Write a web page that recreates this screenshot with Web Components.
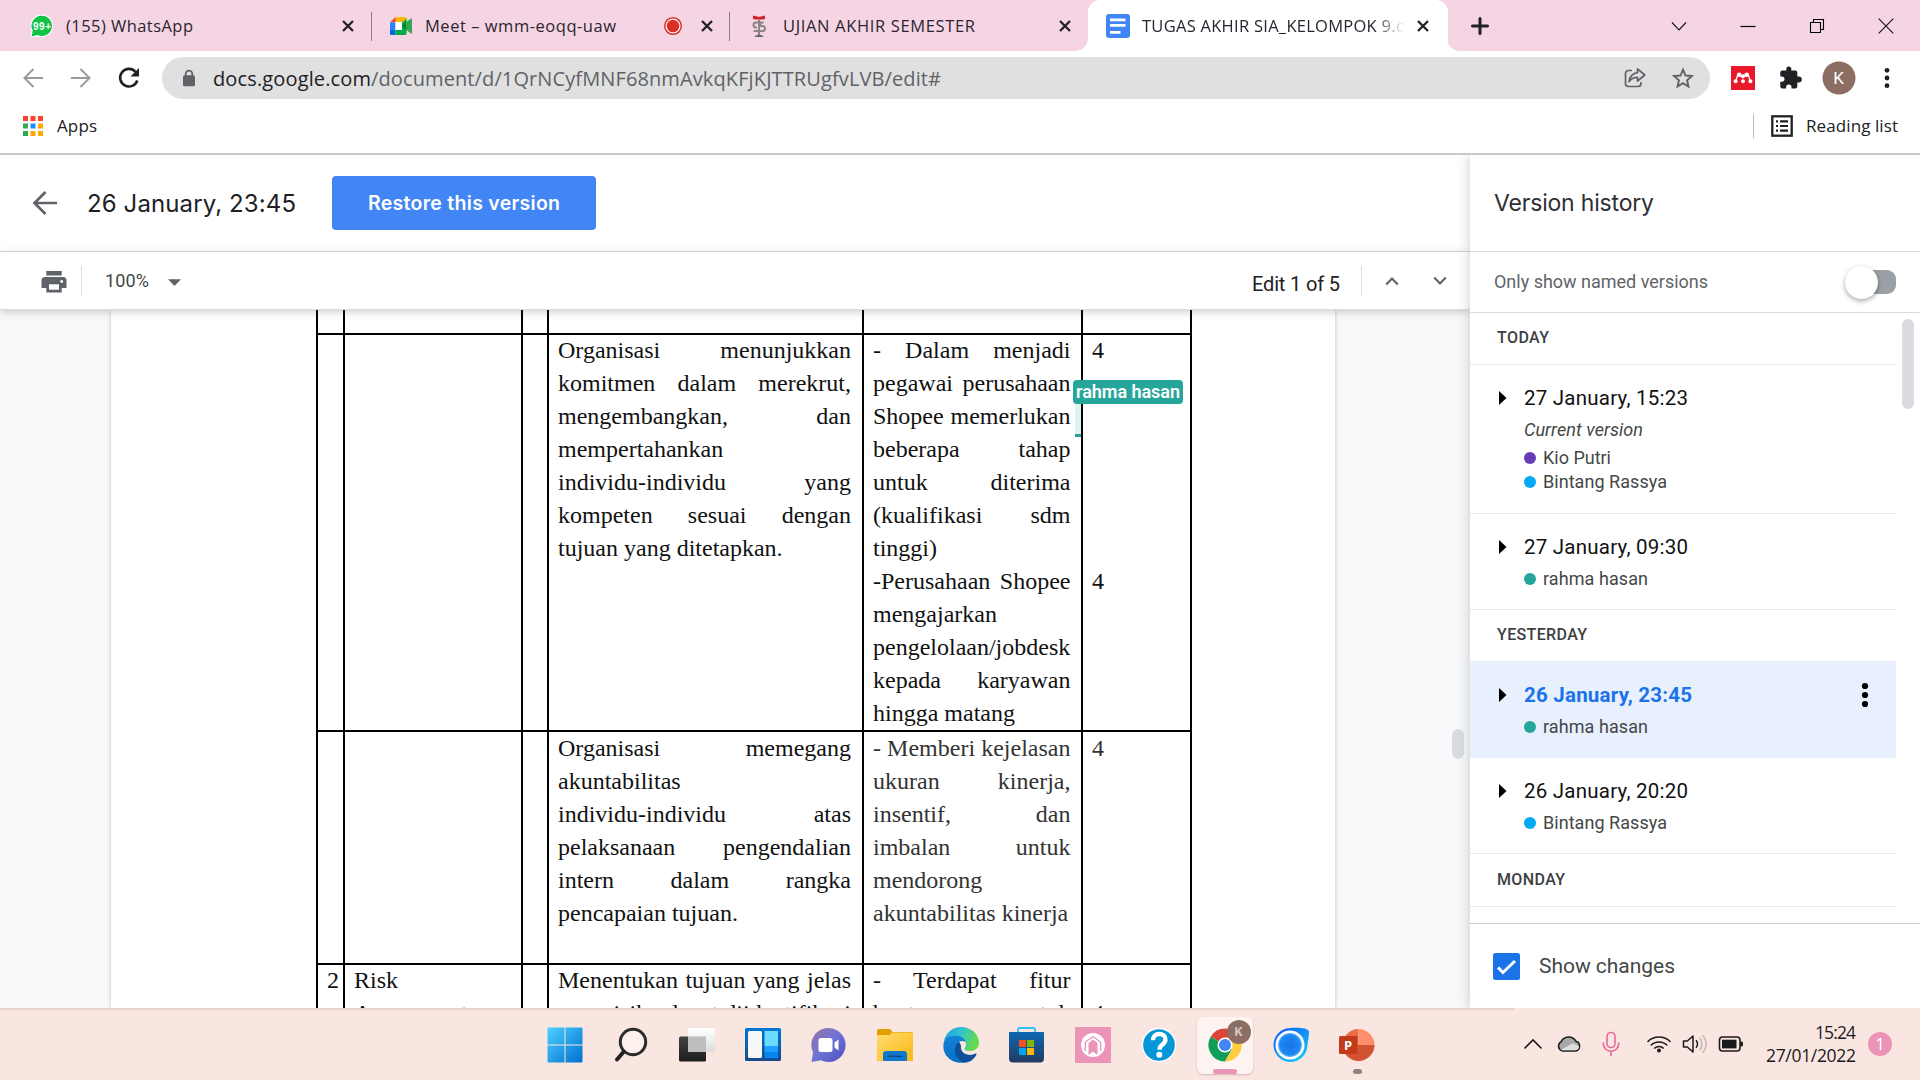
<!DOCTYPE html>
<html lang="id">
<head>
<meta charset="utf-8">
<title>TUGAS AKHIR SIA_KELOMPOK 9</title>
<style>
html,body{margin:0;padding:0}
body{width:1920px;height:1080px;overflow:hidden;background:#fff;font-family:Roboto,"Liberation Sans",sans-serif}
</style>
</head>
<body>
<desktop-screen></desktop-screen>
<script>
const define = (name, css, html, after) => {
  const t = document.createElement('template');
  t.innerHTML = '<style>*{box-sizing:border-box}:host{display:block;box-sizing:border-box}' + css + '</style>' + (typeof html === 'string' ? html : '');
  customElements.define(name, class extends HTMLElement {
    constructor() { super(); this.attachShadow({ mode: 'open' }).appendChild(t.content.cloneNode(true)); }
    connectedCallback() {
      if (this.ready) return;
      this.ready = true;
      if (typeof html === 'function') {
        const d = document.createElement('template');
        d.innerHTML = html(this);
        this.shadowRoot.appendChild(d.content.cloneNode(true));
      }
      if (after) after(this);
    }
  });
};

const ICONS = {
  whatsapp: [24, 24, '<path d="M12 .5A11.3 11.3 0 0 0 1.6 17L.5 23.6l6.700-1.400A11.300 11.300 0 1 0 12 .5z" fill="#fff"/><path d="M12 1.700A10.200 10.200 0 0 0 2.800 16.800L1.600 22.400l5.800-1.300A10.200 10.200 0 1 0 12 1.700z" fill="#0fc344"/><text x="12" y="15.800" text-anchor="middle" font-family="Liberation Sans" font-weight="700" font-size="10" textLength="18" fill="#fff">99+</text>'],
  meet: [24, 20, '<path d="M6.500 1H16a1.500 1.500 0 0 1 1.500 1.500V6h-11z" fill="#ffba00"/><path d="M1 6.500 6.500 1v5.500z" fill="#ea4335"/><path d="M1 6.500h5.500V14H1z" fill="#2684fc"/><path d="M1 14h5.500v5H2.500A1.500 1.500 0 0 1 1 17.500z" fill="#0066da"/><path d="M6.500 14h6V7l5-4.500v15A1.500 1.500 0 0 1 16 19H6.500z" fill="#00ac47"/><path d="M6.500 6H13v8H6.500z" fill="#fff"/><path d="M13 10l4.500-4.500v9z" fill="#00832d"/><path d="m17.500 6 4-3.300c.8-.5 1.500-.3 1.500.6v13.400c0 .9-.7 1.200-1.500.6l-4-3.300z" fill="#34a853"/>'],
  rec: [20, 20, '<circle cx="10" cy="10" r="8.300" fill="#fff" stroke="#d93025" stroke-width="1.500"/><circle cx="10" cy="10" r="6.300" fill="#d93025"/>'],
  ujian: [20, 24, '<path d="M4 1.500 10 3l6-1.500V5l-3 .6h-6L4 5z" fill="#d8202b"/><g fill="none" stroke="#8b8588" stroke-width="2"><path d="M14.500 8.500H7a2.500 2.500 0 0 0 0 5h1M10 6v15M8 17H4.500M11.500 9.500V12h2a2.300 2.300 0 0 1 0 5H6"/></g><path d="M5.500 23c1-2 2.500-2.300 4.500-2.300s3.500.3 4.500 2.300z" fill="#6b6668"/>'],
  docs: [24, 24, '<rect width="24" height="24" rx="3" fill="#4285f4"/><path d="M4 4.500h15.500v2.700H4zM4 10h15.500v2.700H4zM4 17h10.500v2.700H4z" fill="#fff"/>'],
  x: [14, 14, '<path d="M2 2l10 10M12 2 2 12" stroke="#202124" stroke-width="2.300"/>'],
  plus: [18, 18, '<path d="M9 1.500v15M1.500 9h15" stroke="#202124" stroke-width="3" stroke-linecap="round"/>'],
  chev: [16, 16, '<path d="M1 4.500 8 12l7-7.500" fill="none" stroke="#111" stroke-width="1.100"/>'],
  min: [16, 16, '<path d="M.5 8.500h15" stroke="#000" stroke-width="1.200"/>'],
  restore: [16, 16, '<path d="M1.500 4.500h10v10h-10zM4.500 4V1.500h10v10H12" fill="none" stroke="#000" stroke-width="1.100"/>'],
  close: [16, 16, '<path d="M.7.7l14.600 14.600M15.300.7.700 15.300" stroke="#111" stroke-width="1.100"/>'],
  back: [24, 24, '<path d="M22 12H4M12.500 3 3.500 12l9 9" fill="none" stroke="#9b9b9b" stroke-width="2"/>'],
  fwd: [24, 24, '<path d="M2 12h18M11.500 3l9 9-9 9" fill="none" stroke="#9b9b9b" stroke-width="2"/>'],
  reload: [24, 24, '<path d="M20.300 14.500A8.800 8.800 0 1 1 18.500 5.800" fill="none" stroke="#202124" stroke-width="2.600"/><path d="M22 2v8.500h-8.500z" fill="#202124"/>'],
  lock: [14, 18, '<path d="M3.700 7V5a3.300 3.300 0 0 1 6.600 0v2" fill="none" stroke="#5f6368" stroke-width="1.800"/><rect x="1" y="6.300" width="12" height="11" rx="1.500" fill="#5f6368"/>'],
  share: [24, 24, '<path d="M9 4.500H5.500a3 3 0 0 0-3 3v10a3 3 0 0 0 3 3H15a3 3 0 0 0 3-3V16" fill="none" stroke="#5f6368" stroke-width="1.700"/><path d="M14.500 2.800 21.800 9l-7.300 6v-3.600c-4 0-6.300 1-8.500 4.300.8-5 3.400-8.300 8.500-9z" fill="none" stroke="#5f6368" stroke-width="1.700" stroke-linejoin="round"/>'],
  star: [24, 24, '<path d="m12 3.600 2.500 5.900 6.400.55-4.850 4.200 1.450 6.250L12 17.200l-5.500 3.300 1.450-6.250L3.100 10.050l6.400-.55z" fill="none" stroke="#5f6368" stroke-width="1.900"/>'],
  mendeley: [24, 24, '<path fill="#e9192b" d="M0 0h24v24H0z"/><path d="M4.600 15c1.400-1.200.6-4.500 2.700-7M19.400 15c-1.400-1.200-.6-4.500-2.700-7" fill="none" stroke="#fff" stroke-width="1.300"/><g fill="#fff"><circle cx="8.300" cy="8.700" r="2.300"/><circle cx="15.700" cy="8.700" r="2.300"/><circle cx="12" cy="10.300" r="2.100"/><circle cx="4.600" cy="15.300" r="2"/><circle cx="12" cy="15.300" r="2"/><circle cx="19.400" cy="15.300" r="2"/></g>'],
  puzzle: [24, 24, '<path fill="#202124" transform="translate(.3 .6)" d="M20.500 10H19V6c0-1.100-.9-2-2-2h-4V2.500a2.500 2.500 0 0 0-5 0V4H4c-1.100 0-2 .9-2 2v3.800h1.500a2.700 2.700 0 0 1 0 5.400H2V20c0 1.100.9 2 2 2h3.800v-1.500a2.700 2.700 0 0 1 5.400 0V22H17c1.100 0 2-.9 2-2v-4h1.500a2.500 2.500 0 0 0 0-6z"/>'],
  avatar: [34, 34, '<circle cx="17" cy="17" r="16.500" fill="#8d6e63"/><text x="16.500" y="23" text-anchor="middle" font-family="Roboto" font-size="17" fill="#fff">K</text>'],
  dots: [6, 22, '<g fill="#202124"><circle cx="3" cy="3.300" r="2.400"/><circle cx="3" cy="11" r="2.400"/><circle cx="3" cy="18.700" r="2.400"/></g>'],
  dotsb: [8, 26, '<g fill="#000"><circle cx="4" cy="4" r="3.100"/><circle cx="4" cy="13" r="3.100"/><circle cx="4" cy="22" r="3.100"/></g>'],
  apps: [20, 20, '<path fill="#ff4131" d="M0 0h5v5H0zM7.500 0h5v5h-5zM15 0h5v5h-5z"/><path fill="#34a853" d="M0 7.500h5v5H0zM0 15h5v5H0z"/><path fill="#1a8cff" d="M7.500 7.500h5v5h-5z"/><path fill="#fa0" d="M15 7.500h5v5h-5zM7.500 15h5v5h-5zM15 15h5v5h-5z"/>'],
  list: [22, 22, '<rect x="1.300" y="1.300" width="19.400" height="19.400" fill="none" stroke="#202124" stroke-width="2.300"/><path d="M5 6.300h2M9 6.300h8M5 11h2M9 11h8M5 15.700h2M9 15.700h8" stroke="#202124" stroke-width="2.200"/>'],
  arrow: [26, 26, '<path d="M25 13H3M13.500 2 2.500 13l11 11" fill="none" stroke="#5f6368" stroke-width="2.700"/>'],
  print: [26, 22, '<path fill="#5f6368" d="M5.300 0h15.400v4.500H5.300zM4 6h18a3.500 3.500 0 0 1 3.500 3.500V17h-4.800v4.500H5.300V17H.5V9.500A3.500 3.500 0 0 1 4 6z"/><path fill="#fff" d="M8 13.300h10v5.400H8z"/><circle cx="20.700" cy="10.500" r="1.400" fill="#fff"/>'],
  caret: [13, 7, '<path d="M0 .3h13L6.500 7z" fill="#5f6368"/>'],
  up: [14, 10, '<path d="m1.200 8.500 5.800-6 5.800 6" fill="none" stroke="#5f6368" stroke-width="2.200"/>'],
  down: [14, 10, '<path d="m1.200 1.500 5.800 6 5.800-6" fill="none" stroke="#5f6368" stroke-width="2.200"/>'],
  tri: [8, 14, '<path d="M0 0v14l7.500-7z" fill="#000"/>'],
  check: [27, 27, '<rect width="27" height="27" rx="2.500" fill="#1a73e8"/><path d="m5 14.500 5 5L22 8" fill="none" stroke="#fff" stroke-width="3"/>'],
  win: [36, 36, '<defs><linearGradient id="w" x1="0" y1="0" x2="1" y2="1"><stop offset="0" stop-color="#4cd0ff"/><stop offset="1" stop-color="#0070cf"/></linearGradient></defs><path fill="url(#w)" d="M1.500.5h16v17h-17V1.500a1 1 0 0 1 1-1zM18.500.5h16a1 1 0 0 1 1 1v16h-17zM.5 18.500h17v17h-16a1 1 0 0 1-1-1zM18.500 18.500h17v16a1 1 0 0 1-1 1h-16z"/>'],
  search: [36, 36, '<circle cx="20" cy="15" r="12.700" fill="#fdf1ee" stroke="#2b2b2b" stroke-width="3"/><path d="m10.500 25-6.500 7.500" stroke="#222" stroke-width="4" stroke-linecap="round"/>'],
  task: [36, 36, '<defs><linearGradient id="t" x1="0" y1="0" x2="0" y2="1"><stop offset="0" stop-color="#444"/><stop offset="1" stop-color="#1c1c1c"/></linearGradient><linearGradient id="t2" x1="0" y1="0" x2="0" y2="1"><stop offset="0" stop-color="#fff"/><stop offset="1" stop-color="#dcdcdc"/></linearGradient></defs><rect y="9.500" width="27" height="25" rx="1.500" fill="url(#t)"/><rect x="9" y="1" width="27" height="24" rx="1" fill="url(#t2)"/><path d="M9 9.500h18V25H9z" fill="#bdbdbd"/>'],
  widget: [36, 36, '<defs><linearGradient id="g" x1="0" y1="0" x2="0" y2="1"><stop offset="0" stop-color="#0078d4"/><stop offset="1" stop-color="#144a8a"/></linearGradient></defs><rect y="1" width="36" height="33" rx="1.500" fill="url(#g)"/><rect x="3" y="4" width="14" height="27" rx="1.500" fill="#f7f7f7"/><path fill="#6bdcff" d="M19.500 4H33v15H19.500z"/><path fill="#1ba1ff" d="M19.500 19H33v6H19.500z"/><path fill="#0586f0" d="M19.500 25H33v6H19.500z"/>'],
  chat: [36, 36, '<defs><linearGradient id="c" x1="0" y1=".2" x2=".8" y2="1"><stop offset="0" stop-color="#9372b0"/><stop offset=".5" stop-color="#6d74d6"/><stop offset="1" stop-color="#5354c4"/></linearGradient></defs><path fill="url(#c)" d="M17.500 1A17 17 0 1 1 10 33.200L.5 35l1.500-9.500A17 17 0 0 1 17.500 1z"/><rect x="7.500" y="11" width="14" height="14" rx="2.500" fill="#fff"/><path d="m23.500 15.500 4-3v11l-4-3z" fill="#fff"/>'],
  folder: [36, 36, '<defs><linearGradient id="f" x1="0" y1="0" x2="1" y2="1"><stop offset="0" stop-color="#ffdc70"/><stop offset="1" stop-color="#fdb813"/></linearGradient></defs><path d="M0 3.500A1.500 1.500 0 0 1 1.500 2H13l2.500 3H35a1 1 0 0 1 1 1v6H0z" fill="#e0a100"/><path d="M0 8h12.500L15 5.500h21V34H0z" fill="url(#f)"/><path d="M6 34v-7a3 3 0 0 1 3-3h18a3 3 0 0 1 3 3v7z" fill="#0f78cc"/><path d="M10.500 29.300h15" stroke="#0a4a8c" stroke-width="1.600"/>'],
  edge: [36, 36, '<defs><linearGradient id="e" x1="0" y1="0" x2="1" y2=".3"><stop offset="0" stop-color="#1d9fd8"/><stop offset=".5" stop-color="#31c3d2"/><stop offset="1" stop-color="#64dc4c"/></linearGradient><linearGradient id="e2" x1="0" y1="0" x2="0" y2="1"><stop offset="0" stop-color="#1383d6"/><stop offset="1" stop-color="#0a6fc9"/></linearGradient></defs><path d="M1 14C2.500 6 9.500 0 18 0c10 0 18 7 18 15.500 0 5.500-4 8.500-9 8.500-3.500 0-5.500-1-5.500-2.300 0-1 1.500-1.700 1.500-4.200C23 13 18.500 10 13 10 8 10 3.500 11.500 1 14z" fill="url(#e)"/><path d="M.5 17c.5-5 5-8.500 11.500-8.500 6 0 10 3 10.500 6.500-6-3-10.500 2-10 8 .5 6.500 5 11.500 11 12.200C11 38-1 30 .5 17z" fill="url(#e2)"/><path d="M16 14.500c-7 4-5 20 6.500 21 5 0 9.500-4.500 11-8.300.3-.8-.3-.9-.9-.6C26 30 16.500 26.500 18 18.500z" fill="#0e4f9a"/>'],
  store: [36, 36, '<defs><linearGradient id="s" x1="0" y1="0" x2="0" y2="1"><stop offset="0" stop-color="#0d69b5"/><stop offset="1" stop-color="#243a5e"/></linearGradient></defs><path d="M9 7V2.500A1.500 1.500 0 0 1 10.500 1h14a1.500 1.500 0 0 1 1.500 1.500V7" fill="none" stroke="#2fc0f5" stroke-width="1.800"/><path d="M0 5h35v26.500a4 4 0 0 1-4 4H4a4 4 0 0 1-4-4z" fill="url(#s)"/><path fill="#f25022" d="M10 13h7v7h-7z"/><path fill="#7fba00" d="M18 13h7v7h-7z"/><path fill="#00a4ef" d="M10 21h7v7h-7z"/><path fill="#ffb900" d="M18 21h7v7h-7z"/>'],
  pink: [36, 36, '<path fill="#ec94b8" d="M0 0h36v36H0z"/><circle cx="18" cy="18" r="12" fill="#fff"/><path d="M10.300 24V15L18 9.800 25.700 15v9" fill="none" stroke="#ec94b8" stroke-width="1.300"/><path d="M13.500 28V16L18 12.500l4.500 3.500v12L18 24.500z" fill="#ec94b8"/>'],
  help: [36, 36, '<circle cx="18" cy="18" r="16.500" fill="#0596d8" stroke="#fff" stroke-width="1.300"/><path d="M12 13.200c0-4 2.600-6.200 6.200-6.200 3.700 0 6.300 2.200 6.300 5.400 0 2.600-1.300 3.900-3.300 5.300-1.900 1.400-2.700 2.300-2.700 5" fill="none" stroke="#fff" stroke-width="4.300"/><circle cx="18.300" cy="27.800" r="3" fill="#fff"/>'],
  chrome: [36, 36, '<path d="M18 18 3.700 9.700A16.500 16.500 0 0 1 32.300 9.700z" fill="#db4437"/><path d="M18 18 3.700 9.700A16.500 16.500 0 0 0 18 34.500l7-12.500z" fill="#0f9d58"/><path d="m18 18 7 4-7 12.500A16.500 16.500 0 0 0 33 10.500H18z" fill="#ffcd40"/><circle cx="18" cy="18" r="7.600" fill="#fff"/><circle cx="18" cy="18" r="6" fill="#4285f4"/>'],
  kbadge: [24, 24, '<circle cx="12" cy="12" r="12" fill="#8d6e63"/><text x="11.500" y="16" text-anchor="middle" font-family="Roboto" font-weight="700" font-size="12.500" fill="#d5c8c4">K</text>'],
  ring: [36, 36, '<defs><linearGradient id="r" x1="0" y1="0" x2=".7" y2="1"><stop offset="0" stop-color="#0a55f5"/><stop offset="1" stop-color="#18c8f8"/></linearGradient><radialGradient id="r2"><stop offset="0" stop-color="#1a72ea"/><stop offset=".75" stop-color="#1d88f2"/><stop offset="1" stop-color="#8fd0ff"/></radialGradient></defs><path d="M17.500 1C24 .5 36 .5 36 5c0 5-1 8-1.500 13A17 17 0 1 1 17.500 1z" fill="url(#r)"/><circle cx="17" cy="18" r="13.200" fill="url(#r2)" stroke="#fff" stroke-width="2.600"/>'],
  ppt: [36, 36, '<path d="M19.500 18V2a16 16 0 0 0-16 16z" fill="#ed6c47"/><path d="M19.500 2a16 16 0 0 1 16 16h-16z" fill="#ff8f6b"/><path d="M3.500 18h32a16 16 0 0 1-32 0z" fill="#d35230"/><rect y="9" width="18.500" height="18" rx="1.500" fill="#c13b1b"/><text x="9" y="22.500" text-anchor="middle" font-family="Open Sans" font-weight="700" font-size="13" fill="#fff">P</text>'],
  tchev: [20, 12, '<path d="m1.500 10.500 8.500-8.500 8.500 8.500" fill="none" stroke="#1b1b1b" stroke-width="1.600"/>'],
  cloud: [26, 18, '<path d="M6.500 16A5 5 0 0 1 5 6.800 8.500 8.500 0 0 1 20 6.300 5 5 0 0 1 19.500 16z" fill="#a8a8a8" stroke="#1b1b1b" stroke-width="1.500"/><path d="M4.500 15 17 8.300l6 3.200c0 2.500-1.500 3.700-3.500 3.700h-13z" fill="#dedede"/>'],
  mic: [18, 26, '<g fill="none" stroke="#e8679d" stroke-width="1.600"><rect x="5" y="1.500" width="8" height="15" rx="4"/><path d="M1.300 11.500v1a7.700 7.700 0 0 0 15.400 0v-1M9 20.500V25"/></g>'],
  wifi: [26, 18, '<g fill="none" stroke="#1b1b1b" stroke-width="1.500"><path d="M1.500 7a16 16 0 0 1 23 0M4.800 10.500a11.500 11.500 0 0 1 16.400 0M8.200 13.500a7 7 0 0 1 9.600 0"/></g><circle cx="13" cy="15.600" r="2" fill="#1b1b1b"/>'],
  sound: [26, 20, '<path d="M1.500 7h3.800L11 2v16l-5.700-5H1.500z" fill="none" stroke="#1b1b1b" stroke-width="1.500" stroke-linejoin="round"/><path d="M14 6.300a5.300 5.300 0 0 1 0 7.400" fill="none" stroke="#1b1b1b" stroke-width="1.500"/><path d="M17.500 3.800a9 9 0 0 1 0 12.400M20.500 1.200a12.500 12.500 0 0 1 0 17.600" fill="none" stroke="#c9b5b0" stroke-width="1.500"/>'],
  batt: [26, 18, '<rect x="1.500" y="2" width="20.500" height="14" rx="3" fill="none" stroke="#1b1b1b" stroke-width="1.600"/><rect x="4" y="4.700" width="14.500" height="8.700" fill="#1b1b1b"/><path d="M22.500 6.500h1A1.500 1.500 0 0 1 25 8v2a1.500 1.500 0 0 1-1.500 1.500h-1z" fill="#1b1b1b"/>']
};
define('ui-icon', ':host{display:block;flex:none;line-height:0}svg{display:block;overflow:visible}', h => {
  const [w, ht, body] = ICONS[h.getAttribute('name')];
  return `<svg width="${w}" height="${ht}" viewBox="0 0 ${w} ${ht}">${body}</svg>`;
});

/* ---------- browser window ---------- */
define('browser-tab', `
:host{display:flex;align-items:center;height:51px;flex:none;font:16.500px "Open Sans",sans-serif;color:#2b2430;border-right:1px solid transparent;position:relative}
:host([sep])::after{content:"";position:absolute;right:-1px;top:12px;height:29px;width:1px;background:#8b7a84}
:host([active]){background:#fff;border-radius:12px 12px 0 0}
:host([active])::before,:host([active])::after{content:"";position:absolute;bottom:0;width:12px;height:12px}
:host([active])::before{left:-12px;background:radial-gradient(circle at 0 0,transparent 11.500px,#fff 12px)}
:host([active])::after{right:-12px;background:radial-gradient(circle at 100% 0,transparent 11.500px,#fff 12px)}
`, '<slot></slot>');

define('tab-strip', `
:host{display:flex;height:51px;background:#f5d5e3;align-items:center}
.fade{width:264px;overflow:hidden;-webkit-mask-image:linear-gradient(90deg,#000 88%,transparent 99.500%)}
.ctl{display:flex;align-items:center;margin-left:auto;gap:53px;padding-right:26px;height:42px}
`, `
<browser-tab sep style="width:372px;padding-left:30px"><ui-icon name="whatsapp"></ui-icon><ui-text w="127" style="margin-left:12px">(155) WhatsApp</ui-text><ui-icon name="x" style="margin-left:148px"></ui-icon></browser-tab>
<browser-tab sep style="width:358px;padding-left:17px"><ui-icon name="meet"></ui-icon><ui-text w="191" style="margin-left:12px">Meet – wmm-eoqq-uaw</ui-text><ui-icon name="rec" style="margin-left:47px"></ui-icon><ui-icon name="x" style="margin-left:17px"></ui-icon></browser-tab>
<browser-tab style="width:358px;padding-left:19px"><ui-icon name="ujian"></ui-icon><ui-text w="192" style="margin-left:14px">UJIAN AKHIR SEMESTER</ui-text><ui-icon name="x" style="margin-left:83px"></ui-icon></browser-tab>
<browser-tab active style="width:360px;padding-left:18px"><ui-icon name="docs"></ui-icon><div class="fade" style="margin-left:12px"><ui-text w="264">TUGAS AKHIR SIA_KELOMPOK 9.d</ui-text></div><ui-icon name="x" style="margin-left:10px"></ui-icon></browser-tab>
<ui-icon name="plus" style="margin-left:23px"></ui-icon>
<div class="ctl"><ui-icon name="chev"></ui-icon><ui-icon name="min"></ui-icon><ui-icon name="restore"></ui-icon><ui-icon name="close"></ui-icon></div>
`);

define('address-bar', `
:host{display:flex;align-items:center;height:54px;padding-left:21px}
.omni{display:flex;align-items:center;width:1548px;height:42px;border-radius:21px;background:#e0e0e0;margin-left:21px;padding-left:20px;font:20px "Open Sans",sans-serif;color:#202124}
.path{color:#5f6368}
`, `
<ui-icon name="back"></ui-icon><ui-icon name="fwd" style="margin-left:24px"></ui-icon><ui-icon name="reload" style="margin-left:24px"></ui-icon>
<div class="omni"><ui-icon name="lock"></ui-icon><ui-text w="158" style="margin-left:17px">docs.google.com</ui-text><ui-text class="path" w="570">/document/d/1QrNCyfMNF68nmAvkqKFjKJTTRUgfvLVB/edit#</ui-text><ui-icon name="share" style="margin-left:682px"></ui-icon><ui-icon name="star" style="margin-left:24px"></ui-icon></div>
<ui-icon name="mendeley" style="margin-left:21px"></ui-icon><ui-icon name="puzzle" style="margin-left:23px"></ui-icon><ui-icon name="avatar" style="margin-left:19.500px"></ui-icon><ui-icon name="dots" style="margin-left:28.500px"></ui-icon>
`);

define('bookmark-bar', `
:host{display:flex;align-items:center;height:50px;padding:0 22px 7px 23px;border-bottom:2px solid #c9c9c9;font:17px "Open Sans",sans-serif;color:#202124}
i{width:1px;height:24px;background:#bfbfbf;margin:0 17px 0 auto}
`, `<ui-icon name="apps"></ui-icon><ui-text w="40" style="margin-left:14px">Apps</ui-text><i></i><ui-icon name="list"></ui-icon><ui-text w="92" style="margin-left:13px">Reading list</ui-text>`);

/* ---------- document viewer ---------- */
define('docs-header', `
:host{display:flex;align-items:center;height:97px;padding-left:32px;border-bottom:1px solid #dadce0;font:24px Inter,sans-serif;color:#202124}
button{display:flex;align-items:center;justify-content:center;width:264px;height:54px;margin:0 0 0 36px;padding:0;border:0;border-radius:4px;background:#4285f4;color:#fff;font:600 19.500px Inter,sans-serif}
`, `<ui-icon name="arrow"></ui-icon><ui-text w="209" style="margin-left:29px">26 January, 23:45</ui-text><button><ui-text w="192">Restore this version</ui-text></button>`);

define('docs-toolbar', `
:host{display:flex;align-items:center;height:58px;padding-left:41px;border-bottom:1px solid #dadce0;background:#fff;box-shadow:0 2px 8px rgba(60,64,67,.25);position:relative;z-index:2;font:18px Roboto,sans-serif;color:#444746}
i{width:1px;height:30px;background:#dadce0}
.edit{font-size:20px;color:#202124;margin:7px 0 0 1071px}
`, `<ui-icon name="print" style="margin-top:2px"></ui-icon><i style="margin-left:14px"></i><ui-text w="44" style="margin-left:23px">100%</ui-text><ui-icon name="caret" style="margin-left:19px;margin-top:3px"></ui-icon><ui-text class="edit" w="88">Edit 1 of 5</ui-text><i style="margin-left:21px"></i><ui-icon name="up" style="margin-left:23px"></ui-icon><ui-icon name="down" style="margin-left:34px"></ui-icon>`);

define('doc-cell', `
:host{border-right:2px solid #000;padding:0 0 0 9px;font:24px/33px "Liberation Serif",serif;color:#111}
div{height:33px;white-space:nowrap;text-align:justify;text-align-last:justify}
div:first-of-type{margin-top:var(--shift,-1px)}
div.l{text-align-last:left}
`, h => {
  const w = h.getAttribute('w');
  const lines = (h.getAttribute('lines') || '').split('|');
  return lines.map(l => `<div class="${l.startsWith('<') ? 'l' : ''}" style="width:${w}px">${l.replace(/^</, '') || '&nbsp;'}</div>`).join('');
});
define('doc-row', `
:host{display:grid;grid-template-columns:27px 178px 26px 315px 219px 109px;border-left:2px solid #000;border-bottom:2px solid #000}
`, '<slot></slot>');

define('doc-canvas', `
:host{display:block;height:698px;background:#f8f9fa;overflow:hidden;position:relative}
.page{width:1224px;height:698px;margin-left:111px;background:#fff;box-shadow:0 0 4px rgba(60,64,67,.3);padding-left:205px}
.table{width:876px}
.tag{position:absolute;left:1073px;top:70px;width:110px;height:24px;border-radius:4px;background:#26a69a;color:#fff;font:600 18px/24px Roboto,sans-serif;padding-left:3px}
.cur{position:absolute;left:1075px;top:94px;width:6px;height:33px;background:#e0f2f1;border-bottom:3px solid #26a69a}
.thumb{position:absolute;left:1452px;top:419px;width:12px;height:30px;border-radius:6px;background:#dadce0}
`, `
<div class="page"><div class="table">
<doc-row style="height:25px"><doc-cell></doc-cell><doc-cell></doc-cell><doc-cell></doc-cell><doc-cell></doc-cell><doc-cell></doc-cell><doc-cell></doc-cell></doc-row>
<doc-row style="height:397px"><doc-cell></doc-cell><doc-cell></doc-cell><doc-cell></doc-cell>
<doc-cell w="293" lines="Organisasi menunjukkan|komitmen dalam merekrut,|mengembangkan, dan|&lt;mempertahankan|individu-individu yang|kompeten sesuai dengan|&lt;tujuan yang ditetapkan."></doc-cell>
<doc-cell w="197.500" lines="- Dalam menjadi|pegawai perusahaan|Shopee memerlukan|beberapa tahap|untuk diterima|(kualifikasi sdm|&lt;tinggi)|-Perusahaan Shopee|&lt;mengajarkan|&lt;pengelolaan/jobdesk|kepada karyawan|&lt;hingga matang"></doc-cell>
<doc-cell w="60" lines="&lt;4|||||||&lt;4"></doc-cell></doc-row>
<doc-row style="height:233px;--shift:0px"><doc-cell></doc-cell><doc-cell></doc-cell><doc-cell></doc-cell>
<doc-cell w="293" lines="Organisasi memegang|&lt;akuntabilitas|individu-individu atas|pelaksanaan pengendalian|intern dalam rangka|&lt;pencapaian tujuan."></doc-cell>
<doc-cell style="color:#333" w="197.500" lines="- Memberi kejelasan|ukuran kinerja,|insentif, dan|imbalan untuk|&lt;mendorong|&lt;akuntabilitas kinerja"></doc-cell>
<doc-cell style="color:#333" w="60" lines="&lt;4"></doc-cell></doc-row>
<doc-row style="height:120px"><doc-cell w="14" lines="&lt;2"></doc-cell><doc-cell w="160" lines="&lt;Risk|&lt;Assessment"></doc-cell><doc-cell></doc-cell>
<doc-cell w="293" lines="Menentukan tujuan yang jelas|agar risiko dapat diidentifikasi"></doc-cell>
<doc-cell w="197.500" lines="- Terdapat fitur|bantuan untuk"></doc-cell><doc-cell w="60" lines="|&lt;4"></doc-cell></doc-row>
</div></div>
<div class="cur"></div><div class="tag"><ui-text w="104">rahma hasan</ui-text></div><div class="thumb"></div>
`);

/* ---------- version history ---------- */
define('day-heading', `
:host{display:flex;align-items:center;height:52px;padding:0 0 2px 27px;border-bottom:1px solid #e8eaed;font:500 16px Roboto,sans-serif;color:#3c4043}
`, h => `<ui-text w="${h.getAttribute('w')}">${h.getAttribute('label')}</ui-text>`);

define('version-item', `
:host{display:grid;grid-template-columns:25px 1fr auto;align-content:start;padding:15px 27px 0 29px;border-bottom:1px solid #e8eaed;height:96px;font:20.500px/36px Roboto,sans-serif;color:#111}
:host([selected]){background:#e8f0fe;height:97px;padding-top:16px;border-color:#e8f0fe}
:host([selected]) .t{font-weight:700;color:#1a73e8}
.tri{margin-top:11px}
:host([selected]) .tri{margin-top:11px}
.cur{font:italic 18px/24px Roboto,sans-serif;color:#444746;margin-top:2px;height:26px}
.p{display:flex;align-items:center;gap:7px;height:24px;font:18px/24px Roboto,sans-serif;color:#444746}
.p b{width:12px;height:12px;border-radius:50%}
.d{margin-top:5px}
.solo{margin-top:2px}
.ppl{margin-top:2px}
`, h => {
  const ppl = h.getAttribute('people').split(';').map(p => p.split(','));
  const cur = h.hasAttribute('current');
  return `<ui-icon class="tri" name="tri"></ui-icon><div><ui-text class="t" w="${h.getAttribute('w') || 164}">${h.getAttribute('when')}</ui-text>
  ${cur ? '<div class="cur"><ui-text w="119">Current version</ui-text></div>' : ''}
  <div class="${cur ? 'ppl' : 'solo'}">${ppl.map(([n, c, w]) => `<div class="p"><b style="background:${c}"></b><ui-text w="${w}">${n}</ui-text></div>`).join('')}</div></div>
  ${h.hasAttribute('selected') ? '<ui-icon class="d" name="dotsb"></ui-icon>' : '<span></span>'}`;
});

define('version-panel', `
:host{display:flex;flex-direction:column;width:450px;height:853px;background:#fff;box-shadow:0 0 12px rgba(60,64,67,.28);clip-path:inset(0 0 0 -20px);position:relative;z-index:3}
.h{display:flex;align-items:center;height:97px;padding-left:24px;border-bottom:1px solid #dadce0;font:23px Inter,sans-serif;color:#2d2f33}
.n{display:flex;align-items:center;justify-content:space-between;height:61px;padding:0 24px 0 24px;border-bottom:1px solid #dadce0;font:18px Roboto,sans-serif;color:#5f6368}
.n ui-text{margin-top:-2px}
.tg{width:47px;height:24px;border-radius:9px;background:#9aa0a6;display:flex;align-items:center}
.tg b{width:33px;height:33px;border-radius:50%;background:#fff;box-shadow:0 2px 5px rgba(0,0,0,.35);margin-left:-4px;flex:none}
.body{display:flex;height:610px;overflow:hidden}
.list{width:426px}
.bar{width:12px;height:90px;border-radius:6px;background:#dadce0;margin:6px 0 0 6px}
.f{display:flex;align-items:center;height:85px;border-top:1px solid #ccc;padding:0 0 0 23px;font:21px Roboto,sans-serif;color:#444746}
`, `
<div class="h"><ui-text w="160">Version history</ui-text></div>
<div class="n"><ui-text w="214">Only show named versions</ui-text><div class="tg"><b></b></div></div>
<div class="body"><div class="list">
<day-heading label="TODAY" w="52"></day-heading>
<version-item current style="height:149px" when="27 January, 15:23" people="Kio Putri,#673ab7,68;Bintang Rassya,#03a9f4,124"></version-item>
<version-item when="27 January, 09:30" people="rahma hasan,#26a69a,105"></version-item>
<day-heading label="YESTERDAY" w="90" style="height:51px;border-color:transparent"></day-heading>
<version-item selected w="168" when="26 January, 23:45" people="rahma hasan,#26a69a,105"></version-item>
<version-item when="26 January, 20:20" people="Bintang Rassya,#03a9f4,124"></version-item>
<day-heading label="MONDAY" w="68" style="height:53px"></day-heading>
</div><div class="bar"></div></div>
<div class="f"><ui-icon name="check"></ui-icon><ui-text w="136" style="margin-left:19px">Show changes</ui-text></div>
`);

/* ---------- taskbar ---------- */
define('task-button', `
:host{display:flex;align-items:center;justify-content:center;width:66px;height:72px;position:relative;flex:none;padding-top:2px}
:host([on])::before{content:"";position:absolute;left:5px;top:9px;width:56px;height:57px;border-radius:6px;background:#fdf3f0;box-shadow:0 1px 2px rgba(150,90,80,.35)}
ui-icon{position:relative}
.bar{position:absolute;bottom:6px;height:5px;border-radius:3px}
:host([on]) .bar{width:24px;background:#ec94b8;left:21px}
:host([run]) .bar{width:9px;background:#8d8380;left:29px}
slot{display:block;position:absolute;left:35px;top:12px}
`, h => `<ui-icon name="${h.getAttribute('icon')}"></ui-icon><span class="bar"></span><slot></slot>`);

define('task-bar', `
:host{display:flex;align-items:center;height:72px;background:#fae6e0;padding-left:532px;font:17.500px "Open Sans",sans-serif;color:#1b1b1b;background-image:linear-gradient(#ead2cc,#ead2cc);background-size:1515px 2px;background-repeat:no-repeat}
.clock{display:flex;flex-direction:column;align-items:flex-end;margin-left:22px;line-height:23px;width:90px}
.n{width:24px;height:24px;border-radius:50%;background:#ec94b8;color:#fff;font-size:17px;line-height:24px;text-align:center;margin-left:12px}
`, `
${['win', 'search', 'task', 'widget', 'chat', 'folder', 'edge', 'store', 'pink', 'help'].map(i => `<task-button icon="${i}"></task-button>`).join('')}
<task-button icon="chrome" on><ui-icon name="kbadge"></ui-icon></task-button><task-button icon="ring"></task-button><task-button icon="ppt" run></task-button>
<ui-icon name="tchev" style="margin-left:133px"></ui-icon><ui-icon name="cloud" style="margin-left:13px"></ui-icon><ui-icon name="mic" style="margin-left:20px"></ui-icon><ui-icon name="wifi" style="margin-left:26px"></ui-icon><ui-icon name="sound" style="margin-left:10px"></ui-icon><ui-icon name="batt" style="margin-left:10px"></ui-icon>
<div class="clock"><ui-text w="41">15:24</ui-text><ui-text w="90">27/01/2022</ui-text></div><div class="n">1</div>
`);

define('desktop-screen', `
:host{display:flex;flex-direction:column;width:1920px;height:1080px}
.app{display:flex;height:853px;overflow:hidden}
.doc{width:1470px;display:flex;flex-direction:column}
`, `<tab-strip></tab-strip><address-bar></address-bar><bookmark-bar></bookmark-bar>
<div class="app"><div class="doc"><docs-header></docs-header><docs-toolbar></docs-toolbar><doc-canvas></doc-canvas></div><version-panel></version-panel></div>
<task-bar></task-bar>`);

/* Text run tracked to an exact advance width; registered last so surrounding styles already apply. */
define('ui-text', ':host{display:inline-block;white-space:nowrap;flex:none}', '<slot></slot>', h => {
  const w = +h.getAttribute('w');
  if (!w) return;
  const n = h.textContent.length;
  const nat = h.getBoundingClientRect().width;
  h.style.letterSpacing = ((w - nat) / (n - 1)).toFixed(3) + 'px';
  h.style.width = w + 'px';
});
</script>
</body>
</html>
